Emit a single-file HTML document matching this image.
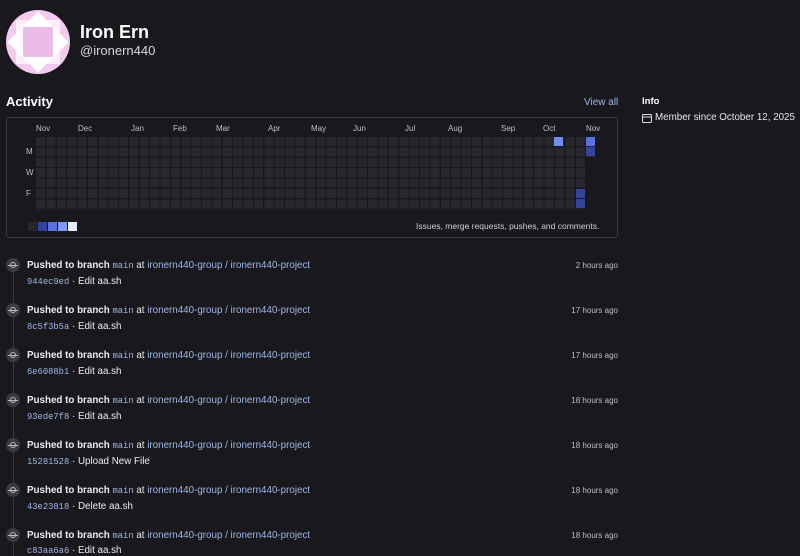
<!DOCTYPE html>
<html><head><meta charset="utf-8"><style>
body{margin:0;width:800px;height:556px;background:#19181d;font-family:"Liberation Sans",sans-serif;color:#ececef;position:relative;overflow:hidden}
.a{position:absolute;white-space:nowrap}
.avatar{left:6px;top:10px;width:64px;height:64px;border-radius:50%;background:#f3cbef;overflow:hidden}
.avatar .w{position:absolute;left:14px;top:14px;width:36px;height:36px;background:#fff;transform:rotate(45deg) scale(1.2)}
.avatar .w2{position:absolute;left:10px;top:10px;width:44px;height:44px;background:#fbeefa}
.avatar .sq{position:absolute;left:17px;top:17px;width:30px;height:30px;background:#ecbbe8}
.box{left:6px;top:117px;width:610px;height:119px;border:1px solid #3a3a40;border-radius:3px}
.grid{left:36px;top:137px;width:550px;height:73px;background-color:#27272d;
background-image:repeating-linear-gradient(90deg,transparent 0 9.2px,#19181d 9.2px 10.38px),repeating-linear-gradient(180deg,transparent 0 9.2px,#19181d 9.2px 10.38px)}
.c{position:absolute;width:9px;height:9px}
.m{font-size:8px;color:#bfbfc5;top:124px}
.d{font-size:8px;color:#bfbfc5;left:26px}
.ic{position:absolute;left:6px;width:14px;height:14px;border-radius:50%;background:#3a3a40}
.ic:after{content:"";position:absolute;left:4px;top:4px;width:4px;height:4px;border:1px solid #bbb;border-radius:50%}
.ic:before{content:"";position:absolute;left:2px;top:6.5px;width:10px;height:1px;background:#bbb}
.t{font-size:9.8px;left:27px}
.t b{font-weight:bold;color:#ececef}
.mono{font-family:"Liberation Mono",monospace;color:#9cb8ea;font-size:8.8px}
.lk{color:#9cb8ea}
.tm{font-size:8px;color:#bfbfc5;right:182px}
</style></head><body>
<div class="a avatar"><div class="w2"></div><div class="w"></div><div class="sq"></div></div>
<div class="a" style="left:80px;top:22px;font-size:18px;font-weight:bold;color:#fff">Iron Ern</div>
<div class="a" style="left:80px;top:43px;font-size:13px;color:#d8d8dc">@ironern440</div>
<div class="a" style="left:6px;top:94px;font-size:13px;font-weight:bold;color:#fff">Activity</div>
<div class="a lk" style="left:584px;top:97px;font-size:10px">View all</div>
<div class="a" style="left:642px;top:96px;font-size:9.5px;font-weight:bold;color:#fff">Info</div>
<svg class="a" style="left:642px;top:113px" width="10" height="10" viewBox="0 0 10 10"><rect x="0.5" y="1.5" width="9" height="8" rx="1" fill="none" stroke="#ddd"/><line x1="0.5" y1="4" x2="9.5" y2="4" stroke="#ddd"/></svg>
<div class="a" style="left:655px;top:112px;font-size:9.8px;color:#e6e6ea">Member since October 12, 2025</div>
<div class="a box"></div>
<div class="a grid"></div>
<div class="a" style="left:586px;top:137px;width:9px;height:20px;background:#27272d"></div>
<div class="c a" style="left:554px;top:137px;background:#6f8ff0"></div>
<div class="c a" style="left:586px;top:137px;background:#5a72e0"></div>
<div class="c a" style="left:586px;top:147px;background:#34449a"></div>
<div class="c a" style="left:576px;top:189px;background:#34449a"></div>
<div class="c a" style="left:576px;top:199px;background:#34449a"></div>
<div class="a m" style="left:36px">Nov</div><div class="a m" style="left:78px">Dec</div><div class="a m" style="left:131px">Jan</div><div class="a m" style="left:173px">Feb</div><div class="a m" style="left:216px">Mar</div><div class="a m" style="left:268px">Apr</div><div class="a m" style="left:311px">May</div><div class="a m" style="left:353px">Jun</div><div class="a m" style="left:405px">Jul</div><div class="a m" style="left:448px">Aug</div><div class="a m" style="left:501px">Sep</div><div class="a m" style="left:543px">Oct</div><div class="a m" style="left:586px">Nov</div>
<div class="a d" style="top:147px">M</div><div class="a d" style="top:168px">W</div><div class="a d" style="top:189px">F</div>
<div class="c a" style="left:28px;top:222px;background:#27272d"></div>
<div class="c a" style="left:38px;top:222px;background:#34449a"></div>
<div class="c a" style="left:48px;top:222px;background:#5a72e0"></div>
<div class="c a" style="left:58px;top:222px;background:#7e9bf5"></div>
<div class="c a" style="left:68px;top:222px;background:#e6ecff"></div>
<div class="a" style="left:416px;top:221px;font-size:8.5px;color:#d0d0d5">Issues, merge requests, pushes, and comments.</div>
<div class="a" style="left:12.5px;top:265px;width:1px;height:291px;background:#3a3a40"></div>

<div class="ic" style="top:258px"></div><div class="a t" style="top:260px"><b>Pushed to branch</b> <span class="mono">main</span> at <span class="lk">ironern440-group / ironern440-project</span></div><div class="a t" style="top:276px"><span class="mono">944ec9ed</span> · Edit aa.sh</div><div class="a tm" style="top:261px">2 hours ago</div>
<div class="ic" style="top:303px"></div><div class="a t" style="top:305px"><b>Pushed to branch</b> <span class="mono">main</span> at <span class="lk">ironern440-group / ironern440-project</span></div><div class="a t" style="top:321px"><span class="mono">8c5f3b5a</span> · Edit aa.sh</div><div class="a tm" style="top:306px">17 hours ago</div>
<div class="ic" style="top:348px"></div><div class="a t" style="top:350px"><b>Pushed to branch</b> <span class="mono">main</span> at <span class="lk">ironern440-group / ironern440-project</span></div><div class="a t" style="top:366px"><span class="mono">6e6088b1</span> · Edit aa.sh</div><div class="a tm" style="top:351px">17 hours ago</div>
<div class="ic" style="top:393px"></div><div class="a t" style="top:395px"><b>Pushed to branch</b> <span class="mono">main</span> at <span class="lk">ironern440-group / ironern440-project</span></div><div class="a t" style="top:411px"><span class="mono">93ede7f8</span> · Edit aa.sh</div><div class="a tm" style="top:396px">18 hours ago</div>
<div class="ic" style="top:438px"></div><div class="a t" style="top:440px"><b>Pushed to branch</b> <span class="mono">main</span> at <span class="lk">ironern440-group / ironern440-project</span></div><div class="a t" style="top:456px"><span class="mono">15281528</span> · Upload New File</div><div class="a tm" style="top:441px">18 hours ago</div>
<div class="ic" style="top:483px"></div><div class="a t" style="top:485px"><b>Pushed to branch</b> <span class="mono">main</span> at <span class="lk">ironern440-group / ironern440-project</span></div><div class="a t" style="top:501px"><span class="mono">43e23818</span> · Delete aa.sh</div><div class="a tm" style="top:486px">18 hours ago</div>
<div class="ic" style="top:528px"></div><div class="a t" style="top:530px"><b>Pushed to branch</b> <span class="mono">main</span> at <span class="lk">ironern440-group / ironern440-project</span></div><div class="a t" style="top:545px"><span class="mono">c83aa6a6</span> · Edit aa.sh</div><div class="a tm" style="top:531px">18 hours ago</div>
</body></html>
